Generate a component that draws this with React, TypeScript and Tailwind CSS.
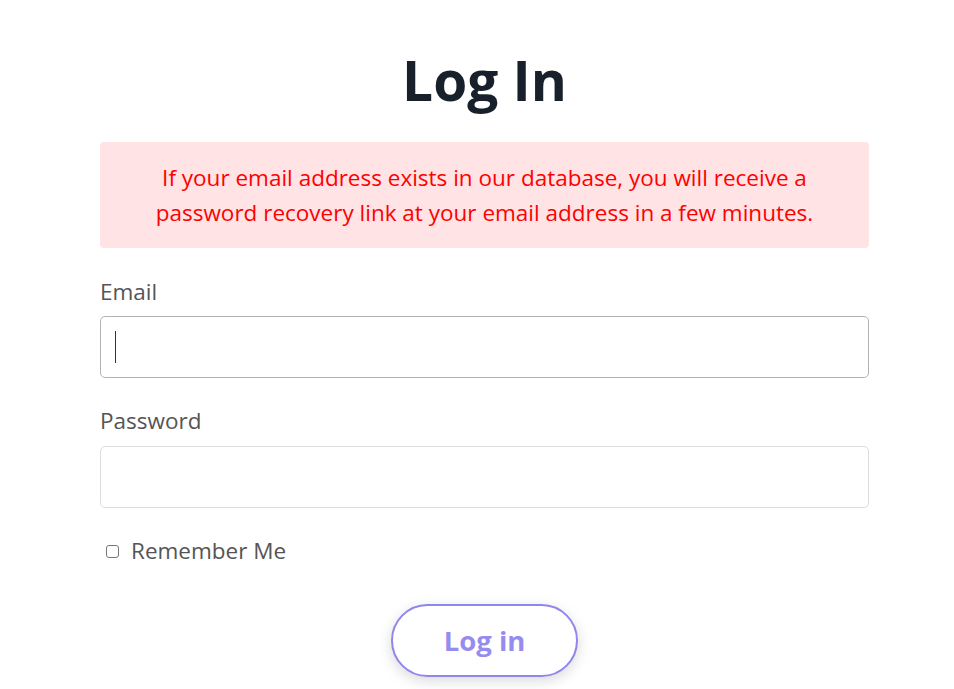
export default function App() {
  return (
    <div className="min-h-screen bg-white font-['Open_Sans',sans-serif]">
      <div className="ml-[100px] w-[769px] pt-[40px]">
        <h1 className="text-center text-[55px] font-bold leading-[80px] text-[#18202c]">Log In</h1>
        <div className="mt-[22px] flex h-[106px] items-center justify-center rounded-[4px] bg-[#ffe3e5] px-8 text-center text-[22.5px] leading-[35px] text-[#ff0000]">
          <p>
            If your email address exists in our database, you will receive a
            <br />
            password recovery link at your email address in a few minutes.
          </p>
        </div>
        <form className="mt-[27px]">
          <label className="block text-[22.5px] leading-[34px] text-[#555]">Email</label>
          <div className="mt-[7px] flex h-[62px] items-center rounded-[5px] border border-[#b3b3b3] px-[14px]">
            <span className="h-[32px] w-px bg-[#333]" />
          </div>
          <label className="mt-[26px] block text-[22.5px] leading-[34px] text-[#555]">Password</label>
          <div className="mt-[8px] h-[62px] rounded-[5px] border border-[#dcdcdc]" />
          <div className="mt-[28px] flex items-center gap-[12px] pl-[6px]">
            <span className="h-[13px] w-[13px] rounded-[3px] border border-[#777] bg-white" />
            <span className="text-[22.5px] leading-[30px] text-[#555]">Remember Me</span>
          </div>
          <div className="mt-[38px] flex justify-center">
            <button
              type="button"
              className="h-[73px] w-[187px] rounded-full border-2 border-[#8f86ee] bg-white text-[27.5px] font-bold text-[#968cf0] shadow-[0_4px_14px_rgba(0,0,0,0.15)]"
            >
              Log in
            </button>
          </div>
        </form>
      </div>
    </div>
  );
}
